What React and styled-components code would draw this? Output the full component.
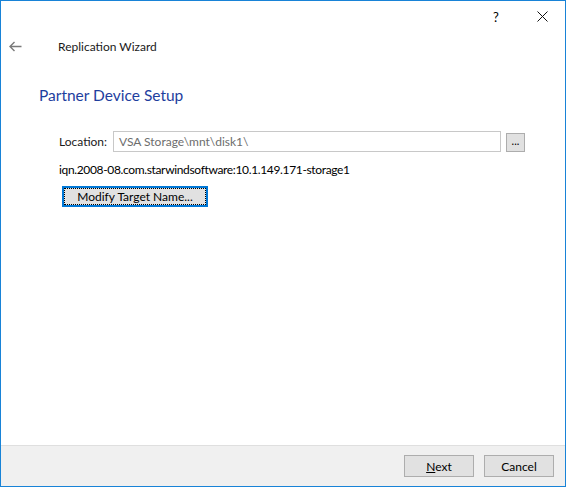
import React from "react";
import styled, { createGlobalStyle } from "styled-components";

const Global = createGlobalStyle`
  html, body {
    margin: 0;
    padding: 0;
    background: #ffffff;
  }
  * {
    box-sizing: border-box;
  }
`;

const Window = styled.div`
  width: 566px;
  height: 487px;
  border: 1px solid #1883d7;
  display: flex;
  flex-direction: column;
  background: #ffffff;
  font-family: Lato, "Noto Sans", sans-serif;
  font-size: 12px;
  color: #000000;
`;

const TitleBar = styled.div`
  height: 31px;
  display: flex;
  justify-content: flex-end;
  align-items: center;
`;

const CaptionButton = styled.div`
  width: 46px;
  height: 30px;
  display: flex;
  align-items: center;
  justify-content: center;
  font-size: 13px;
  color: #000;
`;

const Header = styled.div`
  display: flex;
  align-items: center;
  height: 28px;
  padding-left: 8px;
`;

const BackButton = styled.div`
  width: 14px;
  display: flex;
  align-items: center;
  color: #7a7a7a;
`;

const WizardTitle = styled.div`
  margin-left: 35px;
  font-size: 12px;
  color: #1a1a1a;
`;

const Body = styled.div`
  flex: 1;
  padding: 24px 0 0 38px;
  display: flex;
  flex-direction: column;
`;

const PageTitle = styled.div`
  font-size: 15.5px;
  color: #1e3e9e;
  height: 22px;
  line-height: 22px;
`;

const Form = styled.div`
  margin-top: 25px;
  padding-left: 20px;
  display: flex;
  flex-direction: column;
`;

const Row = styled.div`
  display: flex;
  align-items: center;
  height: 21px;
`;

const Label = styled.div`
  width: 54px;
  color: #1a1a1a;
`;

const Input = styled.div`
  width: 388px;
  height: 21px;
  border: 1px solid #c8c8c8;
  padding-left: 5px;
  display: flex;
  align-items: center;
  color: #6d6d6d;
`;

const Button = styled.div`
  height: ${(p) => p.$h || 21}px;
  width: ${(p) => p.$w}px;
  background: #e1e1e1;
  border: 1px solid #adadad;
  display: flex;
  align-items: center;
  justify-content: center;
  color: #000;
`;

const BrowseButton = styled(Button)`
  margin-left: 5px;
  margin-top: 1px;
  font-size: 11px;
  padding-bottom: 3px;
`;

const Iqn = styled.div`
  margin-top: 9px;
  height: 17px;
  line-height: 17px;
  letter-spacing: -0.35px;
`;

const FocusButton = styled(Button)`
  margin-top: 8px;
  margin-left: 3px;
  border: 2px solid #0078d7;
  padding: 0;
`;

const FocusInner = styled.div`
  width: 100%;
  height: 100%;
  border: 1px dotted #000;
  display: flex;
  align-items: center;
  justify-content: center;
`;

const Footer = styled.div`
  height: 41px;
  background: #f0f0f0;
  border-top: 1px solid #dfdfdf;
  display: flex;
  justify-content: flex-end;
  align-items: flex-start;
  padding: 9px 11px 0 0;
  gap: 10px;
`;

const Accel = styled.span`
  text-decoration: underline;
`;

export default function App() {
  return (
    <>
      <Global />
      <Window>
        <TitleBar>
          <CaptionButton>?</CaptionButton>
          <CaptionButton>
            <svg width="11" height="11" viewBox="0 0 11 11">
              <path d="M0.5 0.5 L10.5 10.5 M10.5 0.5 L0.5 10.5" stroke="#111" strokeWidth="1" />
            </svg>
          </CaptionButton>
        </TitleBar>
        <Header>
          <BackButton>
            <svg width="13" height="11" viewBox="0 0 13 11">
              <path d="M1 5.5 H12.5 M5.5 1 L1 5.5 L5.5 10" stroke="#7a7a7a" strokeWidth="1.4" fill="none" />
            </svg>
          </BackButton>
          <WizardTitle>Replication Wizard</WizardTitle>
        </Header>
        <Body>
          <PageTitle>Partner Device Setup</PageTitle>
          <Form>
            <Row>
              <Label>Location:</Label>
              <Input>VSA Storage\mnt\disk1\</Input>
              <BrowseButton $w={19} $h={19}>...</BrowseButton>
            </Row>
            <Iqn>iqn.2008-08.com.starwindsoftware:10.1.149.171-storage1</Iqn>
            <FocusButton $w={146} $h={21}>
              <FocusInner>Modify Target Name...</FocusInner>
            </FocusButton>
          </Form>
        </Body>
        <Footer>
          <Button $w={70} $h={22}>
            <Accel>N</Accel>ext
          </Button>
          <Button $w={70} $h={22}>Cancel</Button>
        </Footer>
      </Window>
    </>
  );
}
